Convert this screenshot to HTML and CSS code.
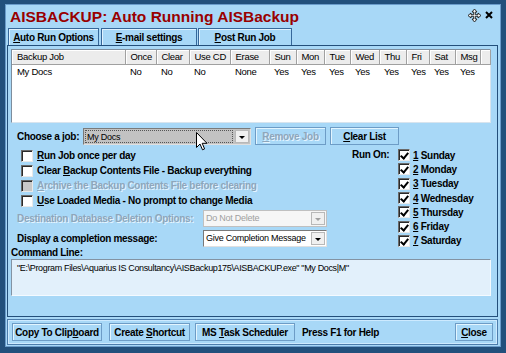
FILE: index.html
```html
<!DOCTYPE html>
<html lang="en">
<head>
    <meta charset="UTF-8">
    <title>AISBACKUP: Auto Running AISBackup</title>
    <link rel="stylesheet" href="styles.css">
</head>
<body>
    <div class="window">
        <div class="titlebar">
            <h1 class="title">AISBACKUP: Auto Running AISBackup</h1>
            <div class="title-icons">
                <svg width="13" height="13" viewBox="0 0 13 13">
                    <path d="M6.5 0 L9 3 L7.3 3 L7.3 5.7 L10 5.7 L10 4 L13 6.5 L10 9 L10 7.3 L7.3 7.3 L7.3 10 L9 10 L6.5 13 L4 10 L5.7 10 L5.7 7.3 L3 7.3 L3 9 L0 6.5 L3 4 L3 5.7 L5.7 5.7 L5.7 3 L4 3 Z" fill="#f2f2f2" stroke="#1a1a1a" stroke-width="0.9"/>
                </svg>
                <svg width="8" height="8" viewBox="0 0 8 8">
                    <path d="M1 1 L7 7 M7 1 L1 7" stroke="#000" stroke-width="2"/>
                </svg>
            </div>
        </div>

        <div class="tabs">
            <div class="tab tab-auto"><u>A</u>uto Run Options</div>
            <div class="tab tab-mail"><u>E</u>-mail settings</div>
            <div class="tab tab-post"><u>P</u>ost Run Job</div>
        </div>

        <div class="panel">
            <div class="list">
                <table class="jobs">
                    <colgroup>
                        <col style="width:113px"><col style="width:31px"><col style="width:33px"><col style="width:41px">
                        <col style="width:39px"><col style="width:27px"><col style="width:28px"><col style="width:26px">
                        <col style="width:29px"><col style="width:27px"><col style="width:23px"><col style="width:26px">
                        <col style="width:25px"><col style="width:10px">
                    </colgroup>
                    <thead>
                        <tr>
                            <th>Backup Job</th><th>Once</th><th>Clear</th><th>Use CD</th><th>Erase</th>
                            <th>Sun</th><th>Mon</th><th>Tue</th><th>Wed</th><th>Thu</th><th>Fri</th><th>Sat</th><th>Msg</th><th></th>
                        </tr>
                    </thead>
                    <tbody>
                        <tr>
                            <td>My Docs</td><td>No</td><td>No</td><td>No</td><td>None</td>
                            <td>Yes</td><td>Yes</td><td>Yes</td><td>Yes</td><td>Yes</td><td>Yes</td><td>Yes</td><td>Yes</td><td></td>
                        </tr>
                    </tbody>
                </table>
            </div>

            <div class="choose-row">
                <span class="choose-label">Choose a job:</span>
                <div class="combo combo-job">
                    <span class="combo-text">My Docs</span>
                    <span class="combo-arrow"></span>
                </div>
                <button class="btn btn-remove" disabled><u>R</u>emove Job</button>
                <button class="btn btn-clear"><u>C</u>lear List</button>
            </div>

            <div class="options">
                <div class="opts-left">
                    <div class="check-row"><span class="box"></span><span><u>R</u>un Job once per day</span></div>
                    <div class="check-row"><span class="box"></span><span>Clear <u>B</u>ackup Contents File - Backup everything</span></div>
                    <div class="check-row disabled"><span class="box"></span><span><u>A</u>rchive the Backup Contents File before clearing</span></div>
                    <div class="check-row"><span class="box"></span><span><u>U</u>se Loaded Media - No prompt to change Media</span></div>
                    <div class="select-row disabled">
                        <span class="select-label">Destination Database Deletion Options:</span>
                        <div class="combo combo-small">
                            <span class="combo-text">Do Not Delete</span>
                            <span class="combo-arrow"></span>
                        </div>
                    </div>
                    <div class="select-row">
                        <span class="select-label">Display a completion message:</span>
                        <div class="combo combo-small">
                            <span class="combo-text">Give Completion Message</span>
                            <span class="combo-arrow"></span>
                        </div>
                    </div>
                </div>
                <div class="opts-right">
                    <span class="run-on">Run On:</span>
                    <div class="days">
                        <div class="day"><span class="box checked"></span><span><u>1</u> Sunday</span></div>
                        <div class="day"><span class="box checked"></span><span><u>2</u> Monday</span></div>
                        <div class="day"><span class="box checked"></span><span><u>3</u> Tuesday</span></div>
                        <div class="day"><span class="box checked"></span><span><u>4</u> Wednesday</span></div>
                        <div class="day"><span class="box checked"></span><span><u>5</u> Thursday</span></div>
                        <div class="day"><span class="box checked"></span><span><u>6</u> Friday</span></div>
                        <div class="day"><span class="box checked"></span><span><u>7</u> Saturday</span></div>
                    </div>
                </div>
            </div>

            <div class="cmd-label">Command Line:</div>
            <div class="cmd-box">"E:\Program Files\Aquarius IS Consultancy\AISBackup175\AISBACKUP.exe" "My Docs|M"</div>
        </div>

        <div class="buttonbar">
            <button class="btn btn-copy">Copy To Clip<u>b</u>oard</button>
            <button class="btn btn-shortcut">Create <u>S</u>hortcut</button>
            <button class="btn btn-task">MS <u>T</u>ask Scheduler</button>
            <span class="help">Press F1 for Help</span>
            <button class="btn btn-close"><u>C</u>lose</button>
        </div>

        <svg class="cursor" width="12" height="19" viewBox="0 0 12 19">
            <path d="M0.5 0.5 L0.5 15.5 L4 12 L6.5 17.8 L8.6 16.9 L6.2 11.3 L11 11.3 Z" fill="#fff" stroke="#000" stroke-width="1"/>
        </svg>
    </div>
</body>
</html>
```

FILE: styles.css
```css
* {
    box-sizing: border-box;
}

body {
    margin: 0;
    font-family: "Liberation Sans", Arial, sans-serif;
    font-size: 10px;
    color: #000;
}

.window {
    position: relative;
    width: 506px;
    height: 353px;
    display: flex;
    flex-direction: column;
    background-color: #a8d8f7;
    border-style: solid;
    border-width: 4px 5px 6px 5px;
    border-color: #22507c;
    box-shadow: inset 0 0 0 1px #6a9ccb;
}

.titlebar {
    height: 24px;
    display: flex;
    justify-content: space-between;
    align-items: center;
    padding: 2px 8px 0 5px;
}

.title {
    margin: 0;
    font-size: 15.5px;
    font-weight: bold;
    color: #990000;
}

.title-icons {
    display: flex;
    align-items: center;
    gap: 4px;
    margin-top: -4px;
}

.tabs {
    display: flex;
    height: 17px;
    padding-left: 3px;
}

.tab {
    border: 1px solid #36679a;
    border-bottom: none;
    box-shadow: inset 1px 1px 0 #dff2ff;
    font-weight: bold;
    letter-spacing: -0.3px;
    text-align: center;
    line-height: 14px;
    padding-top: 2px;
}

.tab-auto { width: 91px; }
.tab-mail { width: 96px; margin-left: 2px; }
.tab-post { width: 94px; margin-left: 1px; }

.panel {
    margin-left: 2px;
    width: 491px;
    height: 272px;
    border: 1px solid #234f7b;
    padding-left: 3px;
}

.list {
    margin-top: 3px;
    width: 480px;
    height: 74px;
    background-color: #fff;
    border: 1px solid #7d8d9d;
    border-right-color: #d8e4ee;
    border-bottom-color: #d8e4ee;
}

.jobs {
    table-layout: fixed;
    border-collapse: collapse;
    width: 478px;
    font-size: 9.5px;
    letter-spacing: -0.3px;
}

.jobs th {
    height: 14px;
    padding: 0 0 0 5px;
    text-align: left;
    font-weight: normal;
    background-color: #ececec;
    border-right: 1px solid #a0a0a0;
    border-bottom: 1px solid #a0a0a0;
    box-shadow: inset 1px 1px 0 #fff;
    white-space: nowrap;
    overflow: hidden;
}

.jobs td {
    height: 14px;
    padding: 1px 0 0 5px;
    white-space: nowrap;
}

.choose-row {
    display: flex;
    align-items: center;
    height: 18px;
    margin-top: 4px;
    padding-left: 6px;
}

.choose-label {
    width: 66px;
    font-weight: bold;
    letter-spacing: -0.3px;
}

.combo {
    display: flex;
    height: 17px;
    background-color: #fff;
    border: 1px solid #7a7a7a;
    border-right-color: #e0e0e0;
    border-bottom-color: #e0e0e0;
}

.combo-text {
    flex: 1;
    padding-left: 2px;
    line-height: 15px;
    font-size: 9px;
    letter-spacing: -0.25px;
    white-space: nowrap;
    overflow: hidden;
}

.combo-arrow {
    position: relative;
    width: 14px;
    margin: 1px;
    background-color: #f0f0f0;
    border: 1px solid #b8b8b8;
}

.combo-arrow::after {
    content: "";
    position: absolute;
    left: 3px;
    top: 5px;
    border-style: solid;
    border-width: 3px 3px 0 3px;
    border-color: #000 transparent transparent transparent;
}

.combo-job {
    width: 168px;
    background-color: #c2c2c2;
}

.combo-job .combo-text {
    margin: 1px;
    outline: 1px dotted #555;
    outline-offset: -1px;
}

.btn {
    height: 18px;
    padding: 0;
    margin: 0;
    background-color: transparent;
    border: 1px solid #6d9cc6;
    box-shadow: inset 1px 1px 0 #e2f5ff;
    font-family: inherit;
    font-size: 10px;
    font-weight: bold;
    letter-spacing: -0.3px;
    color: #000;
}

.btn-remove {
    width: 71px;
    margin-left: 4px;
    color: #8ea6bb;
    text-shadow: 1px 1px 0 #e4f4ff;
}

.btn-clear {
    width: 69px;
    margin-left: 4px;
}

.options {
    display: flex;
    margin-top: 3px;
}

.opts-left {
    width: 327px;
}

.check-row {
    display: flex;
    align-items: center;
    gap: 4px;
    height: 15px;
    padding-left: 10px;
    font-weight: bold;
    letter-spacing: -0.3px;
}

.box {
    position: relative;
    width: 12px;
    height: 12px;
    flex: none;
    background-color: #fff;
    border: 1px solid #6a6a6a;
    border-right-color: #e8e8e8;
    border-bottom-color: #e8e8e8;
    box-shadow: inset 1px 1px 0 #2a2a2a;
}

.box.checked::after {
    content: "";
    position: absolute;
    left: 3px;
    top: 1px;
    width: 3px;
    height: 6px;
    border-style: solid;
    border-color: #000;
    border-width: 0 2px 2px 0;
    transform: rotate(40deg);
}

.disabled {
    color: #8ea6bb;
    text-shadow: 1px 1px 0 #e4f4ff;
}

.disabled .box {
    background-color: #c8c8c8;
}

.select-row {
    display: flex;
    align-items: center;
    height: 20px;
    padding-left: 6px;
    font-weight: bold;
    letter-spacing: -0.3px;
}

.select-label {
    width: 186px;
}

.combo-small {
    width: 124px;
    font-weight: normal;
    text-shadow: none;
}

.select-row.disabled .combo {
    background-color: #f6f6f6;
    border-color: #c0c0c0;
}

.select-row.disabled .combo-text {
    color: #a0a0a0;
}

.select-row.disabled .combo-arrow::after {
    border-top-color: #a0a0a0;
}

.opts-right {
    display: flex;
    padding-left: 14px;
    font-weight: bold;
    letter-spacing: -0.3px;
}

.run-on {
    width: 46px;
    line-height: 14px;
}

.day {
    display: flex;
    align-items: center;
    gap: 3px;
    height: 14.3px;
}

.cmd-label {
    font-weight: bold;
    letter-spacing: -0.3px;
    line-height: 10px;
}

.cmd-box {
    margin-top: 1px;
    width: 480px;
    height: 37px;
    padding: 3px 5px;
    background-color: #e2f0fb;
    border: 1px solid #8393a3;
    border-right-color: #f4faff;
    border-bottom-color: #f4faff;
    font-size: 9px;
    letter-spacing: -0.35px;
}

.buttonbar {
    display: flex;
    align-items: center;
    margin: 2px 0 0 2px;
    width: 491px;
    height: 26px;
    padding: 0 4px;
    border: 1px solid #4c7cab;
    box-shadow: inset 0 0 0 1px #cdeaff;
}

.btn-copy { width: 90px; }
.btn-shortcut { width: 81px; margin-left: 7px; }
.btn-task { width: 100px; margin-left: 5px; }

.help {
    margin-left: 7px;
    font-weight: bold;
    letter-spacing: -0.3px;
}

.btn-close {
    width: 38px;
    margin-left: auto;
}

.cursor {
    position: absolute;
    left: 191px;
    top: 128px;
}
```
